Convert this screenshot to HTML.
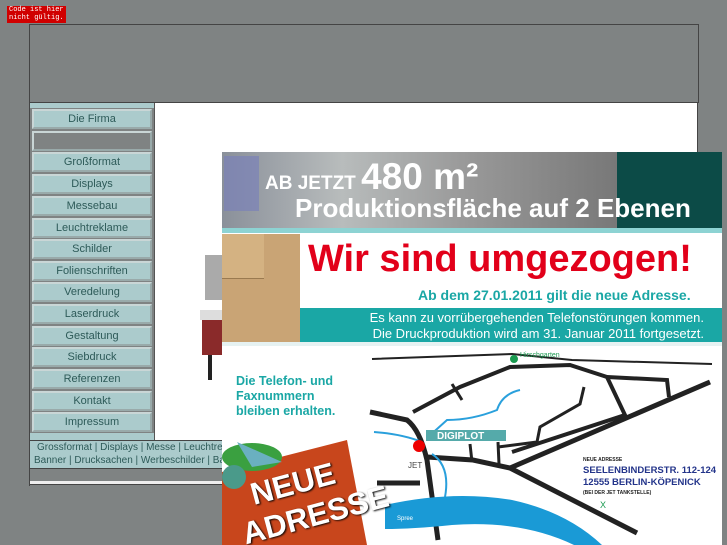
<!DOCTYPE html>
<html><head><meta charset="utf-8"><style>
body{margin:0;width:727px;height:545px;background:#7f8383;position:relative;overflow:hidden;font-family:"Liberation Sans",sans-serif}
.abs{position:absolute}
.btn{position:absolute;left:32px;width:116px;height:16px;background:#abcbcc;border:2px solid #c9d6d6;border-right-color:#9aa;border-bottom-color:#9aa;color:#2d5a58;font-size:11px;text-align:center;line-height:16px}
</style></head><body>
<div class="abs" style="left:7px;top:6px;width:57px;height:17px;background:#d00000;color:#fff;font:7px/8px 'Liberation Mono',monospace;padding-left:2px">Code ist hier<br>nicht gültig.</div>
<div class="abs" style="left:29px;top:24px;width:668px;height:78px;border:1px solid #444;border-bottom:none"></div>
<div class="abs" style="left:29px;top:102px;width:669px;height:1px;background:#444"></div>
<div class="abs" style="left:29px;top:103px;width:1px;height:383px;background:#444"></div>
<div class="abs" style="left:697px;top:103px;width:1px;height:50px;background:#444"></div>
<div class="abs" style="left:30px;top:103px;width:124px;height:5px;background:#abcbcc"></div>
<div class="abs" style="left:154px;top:103px;width:1px;height:337px;background:#555"></div>
<div class="abs" style="left:155px;top:103px;width:542px;height:337px;background:#fff"></div>
<div class="btn" style="top:109px">Die Firma</div>
<div class="btn" style="top:131px;background:#7f8383"></div>
<div class="btn" style="top:152px">Großformat</div>
<div class="btn" style="top:174px">Displays</div>
<div class="btn" style="top:196px">Messebau</div>
<div class="btn" style="top:218px">Leuchtreklame</div>
<div class="btn" style="top:239px">Schilder</div>
<div class="btn" style="top:261px">Folienschriften</div>
<div class="btn" style="top:282px">Veredelung</div>
<div class="btn" style="top:304px">Laserdruck</div>
<div class="btn" style="top:326px">Gestaltung</div>
<div class="btn" style="top:347px">Siebdruck</div>
<div class="btn" style="top:369px">Referenzen</div>
<div class="btn" style="top:391px">Kontakt</div>
<div class="btn" style="top:412px">Impressum</div>
<div class="abs" style="left:30px;top:433px;width:124px;height:7px;background:#abcbcc"></div>
<div class="abs" style="left:29px;top:440px;width:669px;height:1px;background:#444"></div>
<div class="abs" style="left:30px;top:441px;width:667px;height:27px;background:#abcbcc;color:#2d5a58;font-size:10px;line-height:13px">
<div style="padding-left:7px">Grossformat | Displays | Messe | Leuchtreklame</div>
<div style="padding-left:4px">Banner | Drucksachen | Werbeschilder | Bauschilder</div></div>
<div class="abs" style="left:29px;top:468px;width:669px;height:1px;background:#444"></div>
<div class="abs" style="left:30px;top:481px;width:667px;height:3px;background:#eee"></div>
<div class="abs" style="left:29px;top:484px;width:669px;height:1px;background:#444"></div>
<!-- printer -->
<div class="abs" style="left:205px;top:255px;width:17px;height:45px;background:#aaa"></div>
<div class="abs" style="left:200px;top:310px;width:22px;height:10px;background:#ddd"></div>
<div class="abs" style="left:202px;top:320px;width:20px;height:35px;background:#8a2a2a"></div>
<div class="abs" style="left:208px;top:355px;width:4px;height:25px;background:#222"></div>
<!-- banner -->
<div class="abs" style="left:222px;top:152px;width:500px;height:393px;background:#fff;overflow:hidden">
<div class="abs" style="left:0;top:0;width:400px;height:76px;background:linear-gradient(90deg,#8a909a,#b8bcbc 30%,#9a9a9a 60%,#777)"></div>
<div class="abs" style="left:2px;top:4px;width:35px;height:55px;background:#7b82b8;opacity:.7"></div>
<div class="abs" style="left:395px;top:0;width:105px;height:76px;background:#0c4b47"></div>
<div class="abs" style="left:43px;top:4px;color:#fff;font-weight:bold;white-space:nowrap"><span style="font-size:19px">AB JETZT </span><span style="font-size:37px">480 m²</span></div>
<div class="abs" style="left:73px;top:41px;color:#fff;font-weight:bold;font-size:26px;white-space:nowrap">Produktionsfläche auf 2 Ebenen</div>
<div class="abs" style="left:0;top:76px;width:500px;height:5px;background:#8dd3d3"></div>
<div class="abs" style="left:0;top:82px;width:78px;height:108px;background:#c9a475"></div>
<div class="abs" style="left:0;top:82px;width:42px;height:44px;background:#d4b282;border-bottom:1px solid #9a7a50"></div>
<div class="abs" style="left:86px;top:86px;color:#e2001a;font-weight:bold;font-size:38px;white-space:nowrap">Wir sind umgezogen!</div>
<div class="abs" style="left:196px;top:135px;color:#1aa7a5;font-weight:bold;font-size:14px;white-space:nowrap">Ab dem 27.01.2011 gilt die neue Adresse.</div>
<div class="abs" style="left:78px;top:156px;width:422px;height:34px;background:#1aa7a5;color:#fff;font-size:13px;line-height:16px;text-align:right"><div style="padding:2px 18px 0 0">Es kann zu vorrübergehenden Telefonstörungen kommen.<br>Die Druckproduktion wird am 31. Januar 2011 fortgesetzt.</div></div>
<div class="abs" style="left:0;top:190px;width:500px;height:4px;background:#e6f2f2"></div>
<div class="abs" style="left:14px;top:222px;color:#1aa7a5;font-weight:bold;font-size:12.5px;line-height:15px">Die Telefon- und<br>Faxnummern<br>bleiben erhalten.</div>
<svg class="abs" style="left:0;top:190px" width="500" height="203">
<path d="M150,17 L290,12 L350,18 L490,22" stroke="#222" stroke-width="2" fill="none"/>
<circle cx="292" cy="17" r="4" fill="#1a9a50"/><text x="298" y="15" font-size="7" fill="#1a9a50" font-family="Liberation Sans">Hirschgarten</text>
<path d="M191,70 L238,45 L288,25 L348,23 L385,35 L403,73 L290,110" stroke="#222" stroke-width="4" fill="none"/>
<path d="M385,35 L445,38 L447,55" stroke="#222" stroke-width="4" fill="none"/>
<path d="M230,42 L240,58" stroke="#222" stroke-width="3"/>
<path d="M288,126 L488,40" stroke="#222" stroke-width="5" fill="none"/>
<path d="M148,70 L185,78 Q198,88 205,118 L216,198" stroke="#222" stroke-width="5" fill="none"/>
<path d="M205,115 L251,118 L288,126 L415,191" stroke="#222" stroke-width="5" fill="none"/>
<path d="M248,102 L250,120 M276,100 L277,122 M276,105 L315,100 L318,85 L358,62 L362,45" stroke="#222" stroke-width="3" fill="none"/>
<path d="M155,141 L198,141" stroke="#222" stroke-width="5"/>
<path d="M298,48 Q280,52 275,68 Q250,78 225,78 L205,96 M152,90 Q180,92 200,100 M210,112 Q230,125 222,160" stroke="#2aa0dc" stroke-width="2" fill="none"/>
<path d="M163,163 Q230,148 290,158 Q345,170 380,203 L352,203 Q300,178 230,183 Q190,187 163,187Z" fill="#1a9ad6"/>
<text x="175" y="178" font-size="6" fill="#fff" font-family="Liberation Sans">Spree</text>
<circle cx="197" cy="104" r="6" fill="#e00"/>
<rect x="204" y="88" width="80" height="11" fill="#5aa"/><text x="215" y="97" font-size="10" font-weight="bold" fill="#fff" font-family="Liberation Sans">DIGIPLOT</text>
<text x="186" y="126" font-size="8" fill="#444" font-family="Liberation Sans">JET</text>
<text x="361" y="119" font-size="5" fill="#222" font-weight="bold" font-family="Liberation Sans">NEUE ADRESSE</text>
<text x="361" y="131" font-size="9.5" fill="#23348a" font-weight="bold" font-family="Liberation Sans">SEELENBINDERSTR. 112-124</text>
<text x="361" y="143" font-size="9.5" fill="#23348a" font-weight="bold" font-family="Liberation Sans">12555 BERLIN-KÖPENICK</text>
<text x="361" y="152" font-size="5" fill="#222" font-weight="bold" font-family="Liberation Sans">(BEI DER JET TANKSTELLE)</text>
<text x="378" y="166" font-size="9" fill="#1a9a50" font-family="Liberation Sans">X</text>
</svg>
<svg class="abs" style="left:0;top:280px" width="150" height="113">
<polygon points="0,40 125,8 145,113 0,113" fill="#c8461c"/>
<ellipse cx="30" cy="25" rx="30" ry="14" fill="#3aa040"/>
<path d="M15,10 L60,30 L30,35Z" fill="#6ab0c0"/>
<ellipse cx="12" cy="45" rx="12" ry="12" fill="#4a9a8a"/>
</svg>
<div class="abs" style="left:14px;top:310px;color:#fff;font-weight:bold;font-size:31px;line-height:36px;transform:rotate(-15deg);text-shadow:1px 1px 2px #000;white-space:nowrap"><span style="padding-left:18px">NEUE</span><br>ADRESSE</div>
</div>
</body></html>
